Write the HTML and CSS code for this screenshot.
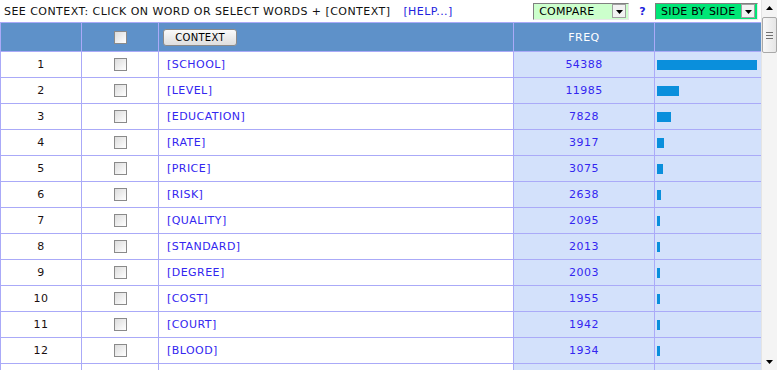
FILE: index.html
```html
<!DOCTYPE html>
<html>
<head>
<meta charset="utf-8">
<link rel="stylesheet" href="styles.css">
</head>
<body>
<div class="frame">
  <div class="main">
    <div class="topbar">
      <span class="hint">SEE CONTEXT: CLICK ON WORD OR SELECT WORDS + [CONTEXT]</span>
      <a class="help">[HELP...]</a>
      <span class="spacer"></span>
      <div class="select compare"><span class="sel-text">COMPARE</span><span class="sel-btn"><svg width="7" height="4" viewBox="0 0 7 4"><path d="M0 0H7L3.5 4Z" fill="#000"/></svg></span></div>
      <span class="qmark">?</span>
      <div class="select sbs"><span class="sel-text">SIDE BY SIDE</span><span class="sel-btn"><svg width="7" height="4" viewBox="0 0 7 4"><path d="M0 0H7L3.5 4Z" fill="#000"/></svg></span></div>
    </div>
    <table class="grid">
      <colgroup>
        <col class="c-num"><col class="c-chk"><col class="c-word"><col class="c-freq"><col class="c-bar">
      </colgroup>
      <thead>
        <tr>
          <th></th>
          <th><span class="chk"></span></th>
          <th class="left"><span class="btn">CONTEXT</span></th>
          <th>FREQ</th>
          <th></th>
        </tr>
      </thead>
      <tbody>
        <tr><td>1</td><td><span class="chk"></span></td><td class="word">[SCHOOL]</td><td class="freq">54388</td><td class="barcell"><span class="bar" style="width:100px"></span></td></tr>
        <tr><td>2</td><td><span class="chk"></span></td><td class="word">[LEVEL]</td><td class="freq">11985</td><td class="barcell"><span class="bar" style="width:22px"></span></td></tr>
        <tr><td>3</td><td><span class="chk"></span></td><td class="word">[EDUCATION]</td><td class="freq">7828</td><td class="barcell"><span class="bar" style="width:14px"></span></td></tr>
        <tr><td>4</td><td><span class="chk"></span></td><td class="word">[RATE]</td><td class="freq">3917</td><td class="barcell"><span class="bar" style="width:7px"></span></td></tr>
        <tr><td>5</td><td><span class="chk"></span></td><td class="word">[PRICE]</td><td class="freq">3075</td><td class="barcell"><span class="bar" style="width:6px"></span></td></tr>
        <tr><td>6</td><td><span class="chk"></span></td><td class="word">[RISK]</td><td class="freq">2638</td><td class="barcell"><span class="bar" style="width:4px"></span></td></tr>
        <tr><td>7</td><td><span class="chk"></span></td><td class="word">[QUALITY]</td><td class="freq">2095</td><td class="barcell"><span class="bar" style="width:3px"></span></td></tr>
        <tr><td>8</td><td><span class="chk"></span></td><td class="word">[STANDARD]</td><td class="freq">2013</td><td class="barcell"><span class="bar" style="width:3px"></span></td></tr>
        <tr><td>9</td><td><span class="chk"></span></td><td class="word">[DEGREE]</td><td class="freq">2003</td><td class="barcell"><span class="bar" style="width:3px"></span></td></tr>
        <tr><td>10</td><td><span class="chk"></span></td><td class="word">[COST]</td><td class="freq">1955</td><td class="barcell"><span class="bar" style="width:3px"></span></td></tr>
        <tr><td>11</td><td><span class="chk"></span></td><td class="word">[COURT]</td><td class="freq">1942</td><td class="barcell"><span class="bar" style="width:3px"></span></td></tr>
        <tr><td>12</td><td><span class="chk"></span></td><td class="word">[BLOOD]</td><td class="freq">1934</td><td class="barcell"><span class="bar" style="width:3px"></span></td></tr>
        <tr><td></td><td></td><td class="word"></td><td class="freq"></td><td class="barcell"></td></tr>
      </tbody>
    </table>
    <div class="bottomline"><span class="bl-blue"></span><span class="bl-grey"></span></div>
  </div>
  <div class="scrollbar">
    <div class="sb-arrow"><svg width="7" height="4" viewBox="0 0 7 4"><path d="M3.5 0L7 4H0Z" fill="#000"/></svg></div>
    <div class="sb-thumb"><span class="grip"></span><span class="grip"></span><span class="grip"></span></div>
    <div class="sb-track"></div>
    <div class="sb-arrow"><svg width="7" height="4" viewBox="0 0 7 4"><path d="M0 0H7L3.5 4Z" fill="#000"/></svg></div>
  </div>
</div>
</body>
</html>
```

FILE: styles.css
```css
html, body {
  margin: 0;
  padding: 0;
  background: #ffffff;
}
body {
  font-family: "DejaVu Sans", Verdana, sans-serif;
  font-size: 11px;
  letter-spacing: 0.45px;
  color: #1a1010;
}
.frame {
  display: flex;
  width: 777px;
  height: 370px;
  overflow: hidden;
}
.main {
  width: 761px;
  height: 370px;
  overflow: hidden;
  display: flex;
  flex-direction: column;
}
.topbar {
  height: 22px;
  flex: none;
  display: flex;
  align-items: center;
  padding-left: 4px;
  padding-right: 3px;
  box-sizing: border-box;
}
.hint {
  color: #111;
  white-space: nowrap;
}
.help {
  color: #2222dd;
  margin-left: 13px;
  white-space: nowrap;
}
.spacer { flex: 1; }
.select {
  height: 17px;
  box-sizing: border-box;
  border-top: 1px solid #808080;
  border-left: 1px solid #808080;
  border-right: 1px solid #e8e8e8;
  border-bottom: 1px solid #e8e8e8;
  display: flex;
  align-items: center;
  justify-content: space-between;
  padding: 1px 2px 1px 5px;
  font-size: 11px;
  letter-spacing: 0.2px;
  color: #000;
}
.compare {
  width: 96px;
  background: #ccffcc;
}
.sbs {
  width: 103px;
  background: #00e676;
}
.sel-text { white-space: nowrap; }
.sel-btn {
  width: 14px;
  height: 14px;
  box-sizing: border-box;
  background: #f2f2f2;
  border: 1px solid #a0a0a0;
  display: flex;
  align-items: flex-end;
  justify-content: center;
  padding-bottom: 3px;
  flex: none;
}
.sel-btn svg { display: block; }
.qmark {
  color: #2222dd;
  font-weight: bold;
  margin: 0 9px 0 10px;
}
.grid {
  border-collapse: collapse;
  table-layout: fixed;
  width: 761px;
  flex: none;
}
.c-num { width: 81px; }
.c-chk { width: 77px; }
.c-word { width: 355px; }
.c-freq { width: 141px; }
.c-bar { width: 107px; }
.grid th, .grid td {
  border: 1px solid #aaaaf8;
  height: 25px;
  padding: 0;
  text-align: center;
  vertical-align: middle;
  font-weight: normal;
  white-space: nowrap;
}
.grid th {
  background: #5e91c9;
  color: #ffffff;
  height: 28px;
}
.grid th.left { text-align: left; padding-left: 4px; }
.chk {
  display: inline-block;
  width: 11px;
  height: 11px;
  border: 1px solid #8a8a8a;
  background: linear-gradient(135deg, #dcdcdc, #ffffff);
  vertical-align: middle;
}
.btn {
  display: inline-block;
  width: 74px;
  height: 17px;
  line-height: 16px;
  box-sizing: border-box;
  border: 1px solid #8a8a8a;
  border-radius: 3px;
  background: linear-gradient(#fafafa, #dedede);
  color: #000;
  font-size: 10px;
  letter-spacing: 0.3px;
  text-align: center;
  vertical-align: middle;
}
.grid td.word {
  text-align: left;
  padding-left: 8px;
  color: #3326f0;
}
.grid td.freq {
  background: #d3e1fb;
  color: #3326f0;
}
.grid td.barcell {
  background: #d3e1fb;
  text-align: left;
  padding-left: 2px;
}
.bar {
  display: block;
  height: 10px;
  background: #0a8fdc;
}
.bottomline {
  flex: none;
  display: flex;
  height: 2px;
  margin-top: auto;
}
.bl-blue { width: 528px; background: #5e91c9; }
.bl-grey { flex: 1; background: #c8c8c8; }
.scrollbar {
  width: 16px;
  height: 370px;
  background: #f4f4f4;
  border-left: 1px solid #e4e4e4;
  box-sizing: border-box;
  display: flex;
  flex-direction: column;
}
.sb-arrow {
  height: 16px;
  flex: none;
  display: flex;
  align-items: center;
  justify-content: center;
}
.sb-thumb {
  height: 36px;
  flex: none;
  margin: 1px 0 0 0;
  background: linear-gradient(90deg, #f8f8f8, #e6e6e6);
  border: 1px solid #a8a8a8;
  border-radius: 2px;
  box-sizing: border-box;
  display: flex;
  flex-direction: column;
  justify-content: center;
  align-items: center;
  gap: 2px;
}
.grip {
  display: block;
  width: 7px;
  height: 1px;
  background: #707070;
}
.sb-track { flex: 1; }
```
